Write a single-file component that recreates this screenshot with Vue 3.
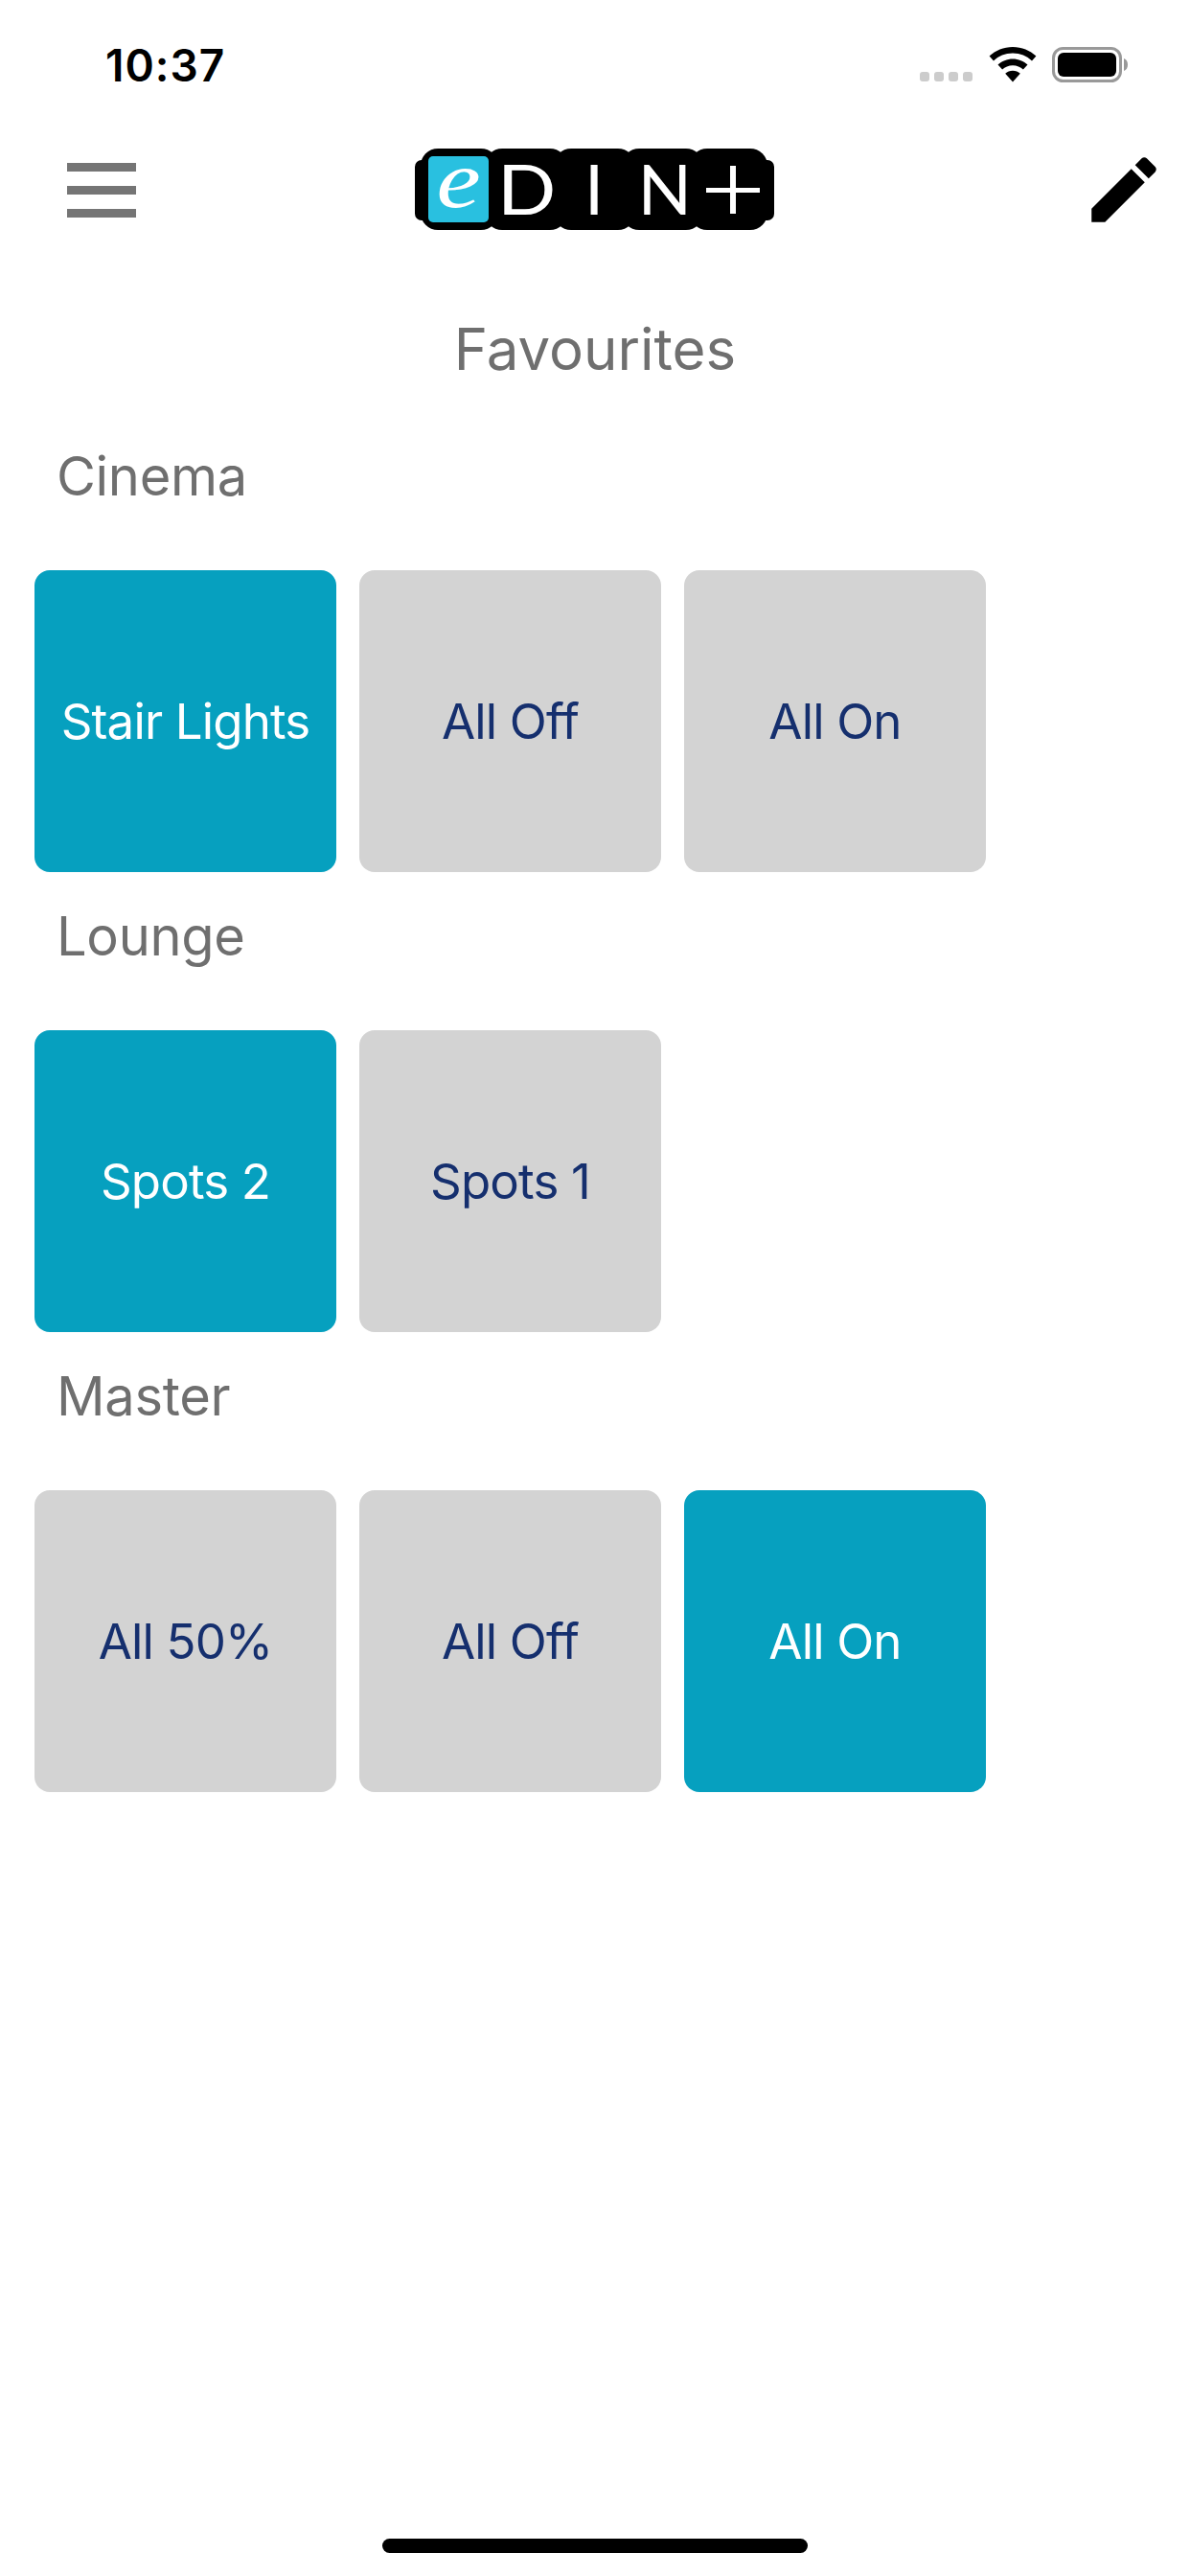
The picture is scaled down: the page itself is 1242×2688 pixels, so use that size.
<script setup>
const sections = [
  { name: 'Cinema', items: [
    { label: 'Stair Lights', on: true },
    { label: 'All Off', on: false },
    { label: 'All On', on: false },
  ] },
  { name: 'Lounge', items: [
    { label: 'Spots 2', on: true },
    { label: 'Spots 1', on: false },
  ] },
  { name: 'Master', items: [
    { label: 'All 50%', on: false },
    { label: 'All Off', on: false },
    { label: 'All On', on: true },
  ] },
]
const blobs = [
  { x: 6, w: 81 },
  { x: 73, w: 86 },
  { x: 145, w: 85 },
  { x: 216, w: 85 },
  { x: 287, w: 81 },
]
</script>

<template>
  <div class="page">
    <div class="status">
      <span class="time">10:37</span>
      <div class="status-icons">
        <div class="dots"><i></i><i></i><i></i><i></i></div>
        <svg class="wifi" width="50" height="37" viewBox="0 0 50 37">
          <path d="M25 0C15.500 0 7 3.600 0.600 9.600L5 14.500C10.200 9.600 17.200 6.600 25 6.600s14.800 3 20 7.900l4.400-4.900C43 3.600 34.500 0 25 0z" />
          <path d="M25 12.400c-6 0-11.400 2.300-15.500 6.100l4.600 5c2.800-2.600 6.600-4.200 10.900-4.200s8.100 1.600 10.900 4.200l4.600-5C36.400 14.700 31 12.400 25 12.400z" />
          <path d="M25 24.800c-3 0-5.700 1.100-7.800 3L25 36.500l7.800-8.700c-2.100-1.900-4.800-3-7.800-3z" />
        </svg>
        <svg class="battery" width="80" height="38" viewBox="0 0 80 38">
          <rect x="1.500" y="1.500" width="70" height="34" rx="10" fill="none" stroke="#999" stroke-width="3" />
          <rect x="6" y="6" width="61" height="25" rx="6" fill="#000" />
          <path d="M75 12c2.500.8 4 3.300 4 6.500s-1.500 5.700-4 6.500z" fill="#999" />
        </svg>
      </div>
    </div>

    <header class="header">
      <svg class="menu" width="72" height="57" viewBox="0 0 72 57">
        <rect x="0" y="0" width="72" height="9" />
        <rect x="0" y="24" width="72" height="9" />
        <rect x="0" y="48" width="72" height="9" />
      </svg>
      <svg class="logo" width="376" height="86" viewBox="0 0 376 86">
        <rect v-for="b in blobs" :key="b.x" :x="b.x" y="0" :width="b.w" height="85" rx="18" />
        <rect x="0" y="12" width="375" height="63" rx="7" />
        <rect x="14" y="8" width="63" height="69" rx="5" fill="#29c0e0" />
        <text x="0" y="0" class="logo-e" transform="translate(45.500 61) scale(1.120 0.920)">e</text>
        <text x="0" y="0" class="logo-l" transform="translate(86 69) scale(1.120 1)">D</text>
        <text x="177" y="69" class="logo-l">I</text>
        <text x="0" y="0" class="logo-l" transform="translate(232.500 69) scale(1.030 1)">N</text>
        <rect x="304" y="41" width="56" height="5" fill="#fff" />
        <rect x="329" y="18" width="6" height="50" fill="#fff" />
      </svg>
      <svg class="edit" width="90" height="90" viewBox="0 0 24 24">
        <path d="M3 17.250V21h3.750L17.810 9.940l-3.750-3.750L3 17.250zM20.710 7.040c.39-.39.39-1.020 0-1.410l-2.340-2.340c-.39-.39-1.020-.39-1.410 0l-1.830 1.830 3.750 3.750 1.830-1.830z" />
      </svg>
    </header>

    <h1 class="title">Favourites</h1>

    <section v-for="s in sections" :key="s.name" class="section">
      <h2 class="section-name">{{ s.name }}</h2>
      <div class="tiles">
        <div v-for="(t, i) in s.items" :key="i" class="tile" :class="{ on: t.on }">{{ t.label }}</div>
      </div>
    </section>

    <div class="home"></div>
  </div>
</template>

<style>
html, body { margin: 0; padding: 0; background: #fff; }
</style>

<style scoped>
.page {
  width: 1242px;
  height: 2688px;
  overflow: hidden;
  display: flex;
  flex-direction: column;
  background: #fff;
  font-family: Inter, "Liberation Sans", sans-serif;
}
.status {
  height: 132px;
  box-sizing: border-box;
  padding: 44px 64px 0 110px;
  display: flex;
  justify-content: space-between;
  align-items: flex-start;
}
.time {
  font-size: 46px;
  line-height: 48px;
  font-weight: 600;
  letter-spacing: 1px;
  color: #000;
}
.status-icons {
  display: flex;
  align-items: flex-start;
  padding-top: 5px;
}
.dots {
  display: flex;
  gap: 5px;
  margin-top: 26px;
  margin-right: 17px;
}
.dots i {
  width: 10px;
  height: 10px;
  border-radius: 3px;
  background: #ccc;
}
.wifi { fill: #000; margin-right: 16px; }
.header {
  height: 132px;
  display: grid;
  grid-template-columns: 1fr auto 1fr;
  align-items: center;
}
.menu { fill: #757575; margin-left: 70px; }
.logo { fill: #000; overflow: visible; }
.logo-e {
  font-family: "Liberation Serif", serif;
  font-style: italic;
  font-size: 93px;
  fill: #fff;
  text-anchor: middle;
}
.logo-l {
  font-family: Lato, "Liberation Sans", sans-serif;
  font-weight: 400;
  font-size: 72px;
  fill: #fff;
}
.edit { fill: #000; justify-self: end; margin-right: 24px; }
.title {
  margin: 0;
  padding: 60px 0 26px;
  text-align: center;
  font-size: 60px;
  line-height: 80px;
  font-weight: 400;
  color: #6f6f6f;
}
.section-name {
  margin: 0;
  height: 165px;
  box-sizing: border-box;
  padding: 27px 0 0 59px;
  font-size: 56px;
  line-height: 80px;
  font-weight: 400;
  letter-spacing: -0.3px;
  color: #6f6f6f;
}
.tiles {
  display: flex;
  gap: 24px;
  padding-left: 36px;
}
.tile {
  width: 315px;
  height: 315px;
  border-radius: 16px;
  display: flex;
  align-items: center;
  justify-content: center;
  font-size: 51px;
  letter-spacing: -0.85px;
  background: #d3d3d3;
  color: #152f6e;
}
.tile.on {
  background: #06a0bf;
  color: #fff;
}
.home {
  margin: auto auto 24px;
  width: 444px;
  height: 15px;
  border-radius: 8px;
  background: #000;
}
</style>
